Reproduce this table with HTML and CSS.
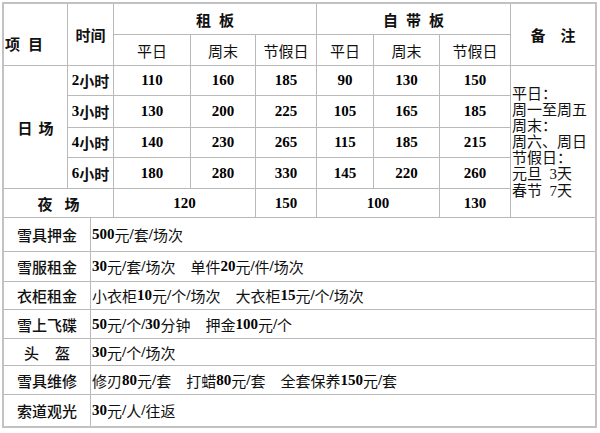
FILE: index.html
```html
<!DOCTYPE html>
<html lang="zh-CN">
<head>
<meta charset="utf-8">
<title>价目表</title>
<link rel="stylesheet" href="styles.css">
</head>
<body>
<div class="sheet">
  <div class="top">
    <div class="cell head item r2">项目</div>
    <div class="cell head r2">时间</div>
    <div class="cell head sp8 c3">租板</div>
    <div class="cell head sp8 c3">自带板</div>
    <div class="cell head sp15 r2">备注</div>

    <div class="cell">平日</div>
    <div class="cell">周末</div>
    <div class="cell">节假日</div>
    <div class="cell">平日</div>
    <div class="cell">周末</div>
    <div class="cell">节假日</div>

    <div class="cell head sp6 r4">日场</div>
    <div class="cell hr"><span class="n">2</span>小时</div>
    <div class="cell n">110</div>
    <div class="cell n">160</div>
    <div class="cell n">185</div>
    <div class="cell n">90</div>
    <div class="cell n">130</div>
    <div class="cell n">150</div>
    <div class="cell note r5">
      <div class="note-lines">
        <div>平日：</div>
        <div>周一至周五</div>
        <div>周末：</div>
        <div>周六、周日</div>
        <div>节假日：</div>
        <div>元旦&ensp;<span class="d">3</span>天</div>
        <div>春节&ensp;<span class="d">7</span>天</div>
      </div>
    </div>

    <div class="cell hr"><span class="n">3</span>小时</div>
    <div class="cell n">130</div>
    <div class="cell n">200</div>
    <div class="cell n">225</div>
    <div class="cell n">105</div>
    <div class="cell n">165</div>
    <div class="cell n">185</div>

    <div class="cell hr"><span class="n">4</span>小时</div>
    <div class="cell n">140</div>
    <div class="cell n">230</div>
    <div class="cell n">265</div>
    <div class="cell n">115</div>
    <div class="cell n">185</div>
    <div class="cell n">215</div>

    <div class="cell hr"><span class="n">6</span>小时</div>
    <div class="cell n">180</div>
    <div class="cell n">280</div>
    <div class="cell n">330</div>
    <div class="cell n">145</div>
    <div class="cell n">220</div>
    <div class="cell n">260</div>

    <div class="cell head sp12 c2">夜场</div>
    <div class="cell n c2">120</div>
    <div class="cell n">150</div>
    <div class="cell n c2">100</div>
    <div class="cell n">130</div>
  </div>

  <div class="bottom">
    <div class="cell label">雪具押金</div>
    <div class="cell text"><span class="n">500</span>元<span class="n">/</span>套<span class="n">/</span>场次</div>

    <div class="cell label">雪服租金</div>
    <div class="cell text"><span class="n">30</span>元<span class="n">/</span>套<span class="n">/</span>场次　单件<span class="n">20</span>元<span class="n">/</span>件<span class="n">/</span>场次</div>

    <div class="cell label">衣柜租金</div>
    <div class="cell text">小衣柜<span class="n">10</span>元<span class="n">/</span>个<span class="n">/</span>场次　大衣柜<span class="n">15</span>元<span class="n">/</span>个<span class="n">/</span>场次</div>

    <div class="cell label">雪上飞碟</div>
    <div class="cell text"><span class="n">50</span>元<span class="n">/</span>个<span class="n">/30</span>分钟　押金<span class="n">100</span>元<span class="n">/</span>个</div>

    <div class="cell label sp16">头盔</div>
    <div class="cell text"><span class="n">30</span>元<span class="n">/</span>个<span class="n">/</span>场次</div>

    <div class="cell label">雪具维修</div>
    <div class="cell text">修刃<span class="n">80</span>元<span class="n">/</span>套　打蜡<span class="n">80</span>元<span class="n">/</span>套　全套保养<span class="n">150</span>元<span class="n">/</span>套</div>

    <div class="cell label">索道观光</div>
    <div class="cell text"><span class="n">30</span>元<span class="n">/</span>人<span class="n">/</span>往返</div>
  </div>
</div>
</body>
</html>
```
FILE: styles.css
```css
html, body {
  margin: 0;
  padding: 0;
  background: #ffffff;
}

body {
  font-family: "Noto Sans CJK SC", sans-serif;
  font-size: 15px;
  color: #111111;
}

.sheet {
  display: flex;
  flex-direction: column;
  gap: 1px;
  width: max-content;
  margin: 2px 0 0 2px;
  border: 2px solid #c2c2c2;
  background: #b9b9b9;
}

.top {
  display: grid;
  grid-template-columns: 63px 45px 76px 64px 60px 56px 65px 70px 84px;
  grid-template-rows: 30px 30px 29px 31px 29px 30px 28px;
  gap: 1px;
}

.bottom {
  display: grid;
  grid-template-columns: 86px 504px;
  grid-template-rows: 33px 29px 27px 28px 26px 28px 31px;
  gap: 1px;
}

.cell {
  background: #ffffff;
  display: flex;
  align-items: center;
  justify-content: center;
  white-space: nowrap;
  line-height: 1;
}

.r2 { grid-row: span 2; }
.r4 { grid-row: span 4; }
.r5 { grid-row: span 5; }
.c2 { grid-column: span 2; }
.c3 { grid-column: span 3; }

.head {
  font-weight: bold;
}

.item {
  justify-content: flex-start;
  padding: 18px 0 0 1px;
  letter-spacing: 8px;
}

.sp6 { letter-spacing: 6px; text-indent: 6px; }
.sp8 { letter-spacing: 8px; text-indent: 8px; }
.sp12 { letter-spacing: 12px; text-indent: 12px; }
.sp15 { letter-spacing: 15px; text-indent: 15px; }
.sp16 { letter-spacing: 16px; text-indent: 16px; }

.n {
  font-family: "Liberation Serif", serif;
  font-weight: bold;
  color: #000000;
}

.hr {
  font-weight: bold;
}

.note {
  justify-content: flex-start;
  padding-left: 1px;
}

.note-lines {
  line-height: 16px;
}

.d {
  font-family: "Liberation Serif", serif;
}

.label {
  font-weight: 500;
}

.text {
  justify-content: flex-start;
  padding-left: 1px;
}
```
